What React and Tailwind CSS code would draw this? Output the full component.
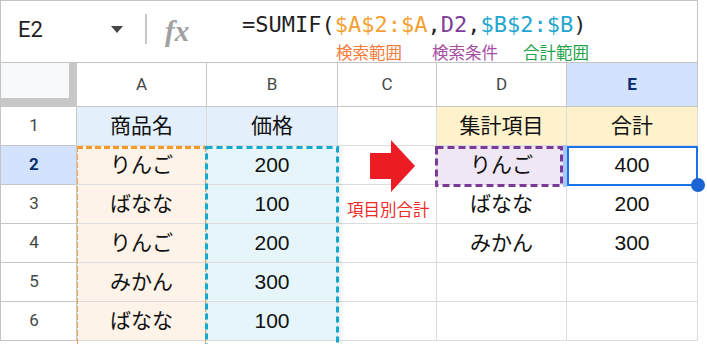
const cellFont = "font-['Liberation_Sans','Noto_Sans_CJK_JP',sans-serif]";
const uiFont = "font-['Roboto','Liberation_Sans',sans-serif]";

const cols = ["A", "B", "C", "D", "E"];

const rows = [
  ["商品名", "価格", "", "集計項目", "合計"],
  ["りんご", "200", "", "りんご", "400"],
  ["ばなな", "100", "", "ばなな", "200"],
  ["りんご", "200", "", "みかん", "300"],
  ["みかん", "300", "", "", ""],
  ["ばなな", "100", "", "", ""],
];

// background per cell (row index, column index)
function cellBg(r, c) {
  if (r === 0 && (c === 0 || c === 1)) return "bg-[#e3effb]";
  if (r === 0 && (c === 3 || c === 4)) return "bg-[#fef2cc]";
  if (c === 0) return "bg-[#fdf3e8]";
  if (c === 1) return "bg-[#e5f5fa]";
  if (r === 1 && c === 3) return "bg-[#efe7f3]";
  return "bg-white";
}

function FormulaBar() {
  return (
    <div className="h-[62px] border-b border-r border-[#c4c4c4] flex relative">
      <div className="h-[56px] flex items-center">
        <div className={`w-[110px] pl-[17px] text-[22px] text-[#1f1f1f] ${uiFont}`}>E2</div>
        <div className="w-0 h-0 border-l-[6.5px] border-r-[6.5px] border-t-[7px] border-l-transparent border-r-transparent border-t-[#444746]" />
        <div className="ml-[22px] w-[2px] h-[30px] bg-[#c7c7c7]" />
        <div className="ml-[18px] w-[30px] font-['Liberation_Serif',serif] italic font-bold text-[29px] text-[#a0a0a0] leading-none mt-[4px]">
          fx
        </div>
      </div>
      <div className="ml-[47px] pt-[10px] flex flex-col">
        <div className="font-['DejaVu_Sans_Mono',monospace] text-[22px] leading-[28px] text-[#1f1f1f] whitespace-pre">
          =SUMIF(<span className="text-[#f5a033]">$A$2:$A</span>,<span className="text-[#7d3c98]">D2</span>,<span className="text-[#22a6cf]">$B$2:$B</span>)
        </div>
        <div className="mt-[3px] flex font-['Noto_Sans_CJK_JP',sans-serif] text-[16.5px] leading-[20px]">
          <span className="ml-[94px] text-[#f47c3c]">検索範囲</span>
          <span className="ml-[30px] text-[#a64ea3]">検索条件</span>
          <span className="ml-[25px] text-[#1fa34a]">合計範囲</span>
        </div>
      </div>
    </div>
  );
}

function Marquee({ left, top, w, h, children }) {
  return (
    <svg
      className="absolute pointer-events-none"
      style={{ left, top }}
      width={w}
      height={h}
      viewBox={`0 0 ${w} ${h}`}
    >
      {children}
    </svg>
  );
}

export default function App() {
  return (
    <div className="w-[707px] h-[344px] bg-white overflow-hidden relative">
      <div className="w-[698px] border-t border-l border-[#c4c4c4]">
        <FormulaBar />

        <div className="grid grid-cols-[76px_130px_131px_99px_130px_131px] grid-rows-[44px_repeat(6,39px)]">
          {/* corner with freeze bars */}
          <div className="bg-[#c7c7c7]">
            <div className="w-[68px] h-[35px] bg-[#f8f9fa]" />
          </div>
          {cols.map((c) => (
            <div
              key={c}
              className={`border-r border-b border-[#c7c7c7] flex items-center justify-center text-[17px] ${uiFont} ${
                c === "E" ? "bg-[#d3e3fd] font-bold text-[#0b2e6e]" : "bg-white text-[#444746]"
              }`}
            >
              {c}
            </div>
          ))}

          {rows.map((row, r) => (
            <div key={r} className="contents">
              <div
                className={`border-r border-b border-[#c7c7c7] flex items-center justify-center pr-[9px] text-[17px] ${uiFont} ${
                  r === 1 ? "bg-[#d3e3fd] font-bold text-[#0b2e6e]" : "bg-white text-[#444746]"
                }`}
              >
                {r + 1}
              </div>
              {row.map((v, c) => (
                <div
                  key={c}
                  className={`border-r border-b border-[#dcdcdc] flex items-center justify-center text-[21px] text-[#111] ${cellFont} ${cellBg(r, c)}`}
                >
                  {v}
                </div>
              ))}
            </div>
          ))}
        </div>
      </div>

      {/* range A2:A6 */}
      <Marquee left={77} top={146} w={130} h={200}>
        <line x1="0" y1="1.5" x2="130" y2="1.5" stroke="#f39a2c" strokeWidth="3" strokeDasharray="6 3" />
        <line x1="0.5" y1="0" x2="0.5" y2="200" stroke="#f0a35a" strokeWidth="1" strokeDasharray="6 2" />
        <line x1="128.5" y1="0" x2="128.5" y2="200" stroke="#f0a35a" strokeWidth="1" strokeDasharray="6 2" />
      </Marquee>

      {/* shadow right of B */}
      <div className="absolute left-[339px] top-[146px] w-[5px] h-[200px] bg-linear-to-r from-[#00000012] to-transparent" />

      {/* range B2:B6 */}
      <Marquee left={205} top={146} w={134} h={200}>
        <rect x="1.5" y="1.5" width="131" height="220" fill="none" stroke="#12a9cd" strokeWidth="3" strokeDasharray="6 4" />
      </Marquee>

      {/* criteria D2 */}
      <Marquee left={435} top={146} w={128} h={41}>
        <rect x="1.5" y="1.5" width="125" height="38" fill="none" stroke="#7b3a98" strokeWidth="3" strokeDasharray="7 4" />
      </Marquee>

      {/* selection E2 */}
      <div className="absolute left-[563px] top-[145px] w-[4px] h-[42px] bg-[#a8c7fa]" />
      <div className="absolute left-[567px] top-[146px] w-[131px] h-[40px] border-2 border-[#1a73e8]" />
      <div className="absolute left-[691px] top-[178px] w-[14px] h-[14px] rounded-full bg-[#1a64d4]" />

      {/* arrow and note */}
      <svg className="absolute left-[370px] top-[140px]" width="45" height="52" viewBox="0 0 45 52">
        <polygon points="0,13 21,13 21,0 45,26 21,52 21,39 0,39" fill="#ec1c24" />
      </svg>
      <div className="absolute left-[347px] top-[199px] font-['Noto_Sans_CJK_JP',sans-serif] text-[16.5px] leading-[20px] text-[#ee2a2a]">
        項目別合計
      </div>
    </div>
  );
}
